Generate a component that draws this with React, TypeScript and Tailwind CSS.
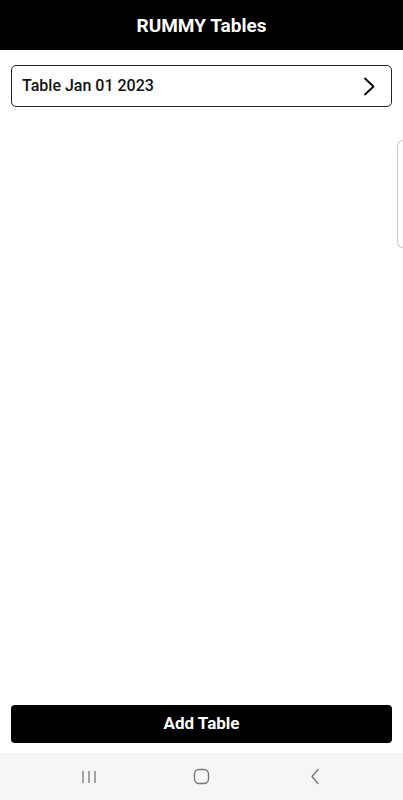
export default function App() {
  return (
    <div className="relative flex h-[800px] w-[403px] flex-col bg-white font-['Roboto',sans-serif] overflow-hidden">
      <header className="flex h-[50px] shrink-0 items-center justify-center bg-black pt-[3px]">
        <h1 className="text-[19px] font-bold text-white">RUMMY Tables</h1>
      </header>

      <main className="flex-1 px-[11px] pt-[15px]">
        <button className="flex h-[42px] w-full items-center justify-between rounded-[5px] border border-[#222] pl-[10px] pr-[15px]">
          <span className="text-[16px] font-medium text-[#111]">Table Jan 01 2023</span>
          <svg width="14" height="19" viewBox="0 0 14 19" className="text-black">
            <path d="M3 1.5 11.5 9.5 3 17.5" stroke="currentColor" strokeWidth="1.8" fill="none" strokeLinecap="round" strokeLinejoin="round" />
          </svg>
        </button>
      </main>

      <div className="absolute right-0 top-[140px] h-[108px] w-[6px] rounded-l-[6px] border border-r-0 border-[#c8c8c8]" />

      <div className="shrink-0 px-[11px] pb-[10px]">
        <button className="flex h-[38px] w-full items-center justify-center rounded-[4px] bg-black text-[17px] font-bold text-white">
          Add Table
        </button>
      </div>

      <nav className="flex h-[47px] shrink-0 items-center justify-center bg-[#f6f6f6]">
        <div className="flex w-[113px] justify-center">
          <svg width="16" height="14" viewBox="0 0 16 14" className="text-[#777]">
            <path d="M2 1v12M8 1v12M14 1v12" stroke="currentColor" strokeWidth="1.3" fill="none" />
          </svg>
        </div>
        <div className="flex w-[113px] justify-center">
          <svg width="17" height="17" viewBox="0 0 17 17" className="text-[#777]">
            <rect x="1.5" y="1.5" width="14" height="14" rx="4.5" stroke="currentColor" strokeWidth="1.4" fill="none" />
          </svg>
        </div>
        <div className="flex w-[113px] justify-center">
          <svg width="12" height="17" viewBox="0 0 12 17" className="text-[#777]">
            <path d="M9 1.5 3 8.5l6 7" stroke="currentColor" strokeWidth="1.4" fill="none" strokeLinejoin="round" strokeLinecap="round" />
          </svg>
        </div>
      </nav>
    </div>
  );
}
